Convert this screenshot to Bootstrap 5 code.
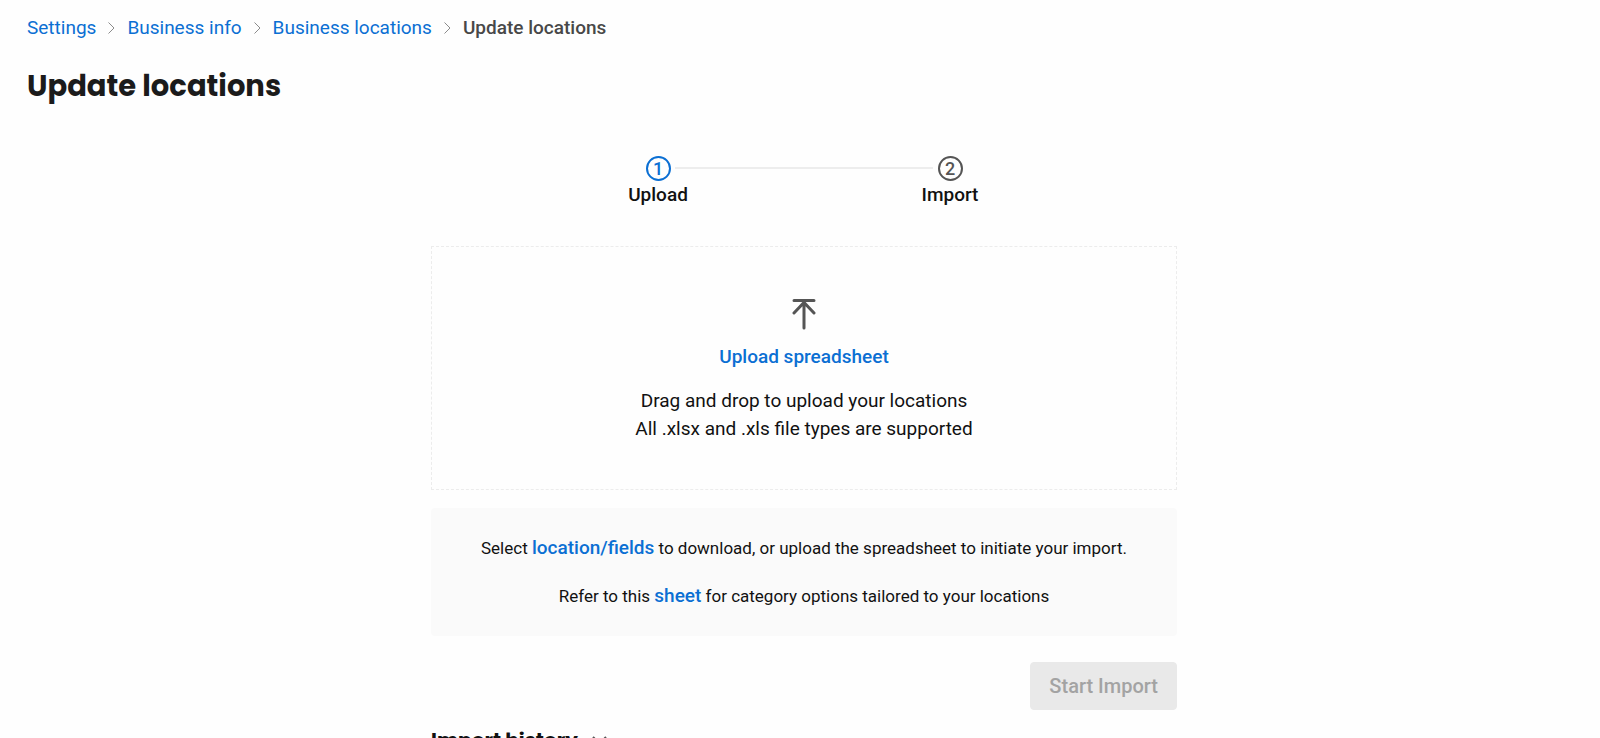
<!DOCTYPE html>
<html lang="en">
<head>
<meta charset="utf-8">
<meta name="viewport" content="width=device-width, initial-scale=1">
<title>Update locations</title>
<link href="https://cdn.jsdelivr.net/npm/bootstrap@5.3.0/dist/css/bootstrap.min.css" rel="stylesheet">
<style>
  body { font: 400 19px/28px Roboto, "Liberation Sans", sans-serif; color: #111; background: #fefefe; }
  a, .link-action { color: #0b6fd3; text-decoration: none; }
  .page { padding: 14px 19px 0 27px; }
  .crumbs { gap: 12px; }
  .crumbs .active { color: #484848; font-weight: 500; }
  .page-title { font: 700 29px/44px Poppins, Inter, sans-serif; color: #1b1b1b; margin-top: 22px; }
  .content { max-width: 746px; }
  .steps { margin-top: 48px; }
  .step { width: 64px; font-weight: 500; line-height: 24px; color: #111; gap: 2px; }
  .step-number { width: 25px; height: 25px; border: 2px solid #555; color: #555; font-size: 18px; line-height: 21px; }
  .step.current .step-number { border-color: #0b6fd3; color: #0b6fd3; }
  .step-line { width: 258px; height: 2px; background: #ededed; margin: 11px -15px 0; }
  .dropzone { border: 1px dashed #ececec; margin-top: 39px; padding: 50px 16px 46px; }
  .link-action { font-weight: 500; line-height: 28px; margin: 12px 0 16px; }
  .info { background: #fafafa; border-radius: 4px; margin-top: 18px; padding: 26px 16px; font-size: 17px; }
  .info a { font-size: 19px; font-weight: 500; }
  .info p + p { margin-top: 20px; }
  .btn-start { --bs-btn-font-size: 20px; --bs-btn-line-height: 28px; --bs-btn-font-weight: 500; --bs-btn-padding-x: 18px; --bs-btn-padding-y: 9px;
    --bs-btn-border-radius: 4px; --bs-btn-disabled-bg: #e9e9e9; --bs-btn-disabled-border-color: #e9e9e9; --bs-btn-disabled-color: #a3a3a3; --bs-btn-disabled-opacity: 1; margin-top: 26px; }
  .history { margin-top: 16px; gap: 14px; }
  .history h2 { font: 700 20px/28px Poppins, Inter, sans-serif; }
</style>
</head>
<body class="vh-100 overflow-hidden">
<main class="page">
  <nav aria-label="Breadcrumb">
    <ol class="crumbs list-unstyled d-flex align-items-center mb-0">
      <li><a href="#">Settings</a></li>
      <li class="d-flex" aria-hidden="true"><svg width="7" height="12" viewBox="0 0 7 12" fill="none" stroke="#8b8b8b"><path d="M.5.5 6 6 .5 11.5"/></svg></li>
      <li><a href="#">Business info</a></li>
      <li class="d-flex" aria-hidden="true"><svg width="7" height="12" viewBox="0 0 7 12" fill="none" stroke="#8b8b8b"><path d="M.5.5 6 6 .5 11.5"/></svg></li>
      <li><a href="#">Business locations</a></li>
      <li class="d-flex" aria-hidden="true"><svg width="7" height="12" viewBox="0 0 7 12" fill="none" stroke="#8b8b8b"><path d="M.5.5 6 6 .5 11.5"/></svg></li>
      <li class="active" aria-current="page">Update locations</li>
    </ol>
  </nav>
  <h1 class="page-title mb-0">Update locations</h1>

  <div class="content mx-auto">
    <div class="steps d-flex justify-content-center">
      <div class="step current d-flex flex-column align-items-center">
        <span class="step-number rounded-circle text-center">1</span><span>Upload</span>
      </div>
      <div class="step-line"></div>
      <div class="step d-flex flex-column align-items-center">
        <span class="step-number rounded-circle text-center">2</span><span>Import</span>
      </div>
    </div>

    <section class="dropzone text-center">
      <svg class="d-block mx-auto" width="24" height="34" viewBox="0 0 24 34" fill="none" stroke="#555" stroke-width="3" stroke-linecap="round"><path d="M2 3.500h20M12 5v26M2 16 12 5.500 22 16"/></svg>
      <button type="button" class="link-action border-0 bg-transparent p-0">Upload spreadsheet</button>
      <p class="mb-0">Drag and drop to upload your locations<br>All .xlsx and .xls file types are supported</p>
    </section>

    <section class="info text-center">
      <p class="mb-0">Select <a href="#">location/fields</a> to download, or upload the spreadsheet to initiate your import.</p>
      <p class="mb-0">Refer to this <a href="#">sheet</a> for category options tailored to your locations</p>
    </section>

    <div class="d-flex justify-content-end">
      <button type="button" class="btn btn-start" disabled>Start Import</button>
    </div>

    <div class="history d-flex align-items-center">
      <h2 class="mb-0">Import history</h2>
      <svg width="15" height="9" viewBox="0 0 15 9" fill="none" stroke="#555" stroke-width="2"><path d="m1 1 6.500 6.500L14 1"/></svg>
    </div>
  </div>
</main>
<script src="https://cdn.jsdelivr.net/npm/bootstrap@5.3.0/dist/js/bootstrap.bundle.min.js"></script>
</body>
</html>
